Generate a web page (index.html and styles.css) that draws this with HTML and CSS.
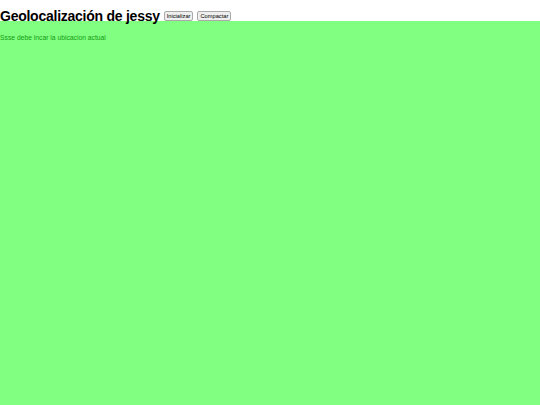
FILE: index.html
```html
<!DOCTYPE html>
<html lang="es">
<head>
<meta charset="utf-8">
<title>Geolocalización</title>
<link rel="stylesheet" href="styles.css">
</head>
<body>
<header class="top">
  <h1 class="title">Geolocalización de jessy</h1>
  <button class="btn">Inicializar</button>
  <button class="btn">Compactar</button>
</header>
<main class="map">
  <p class="status">Ssse debe incar la ubicacion actual</p>
</main>
</body>
</html>
```
FILE: styles.css
```css
html, body {
  margin: 0;
  padding: 0;
  height: 100%;
  background: #fff;
  font-family: "Liberation Sans", Arial, sans-serif;
}
body {
  display: flex;
  flex-direction: column;
}
.top {
  height: 21px;
  display: flex;
  align-items: flex-end;
  gap: 4px;
  white-space: nowrap;
}
.title {
  margin: 0;
  font-size: 14px;
  letter-spacing: -0.25px;
  font-weight: bold;
  line-height: 16px;
  color: #000;
  position: relative;
  top: 3px;
}
.btn {
  font-family: "Liberation Sans", Arial, sans-serif;
  font-size: 5.7px;
  line-height: 8px;
  height: 10px;
  padding: 0 2px;
  margin-bottom: 0;
  border: 1px solid #aaa;
  border-radius: 2px;
  background: #eee;
  color: #000;
}
.map {
  flex: 1;
  background: #80ff80;
}
.status {
  margin: 12px 0 0;
  font-size: 6.75px;
  line-height: 9px;
  color: #139a13;
}
```
